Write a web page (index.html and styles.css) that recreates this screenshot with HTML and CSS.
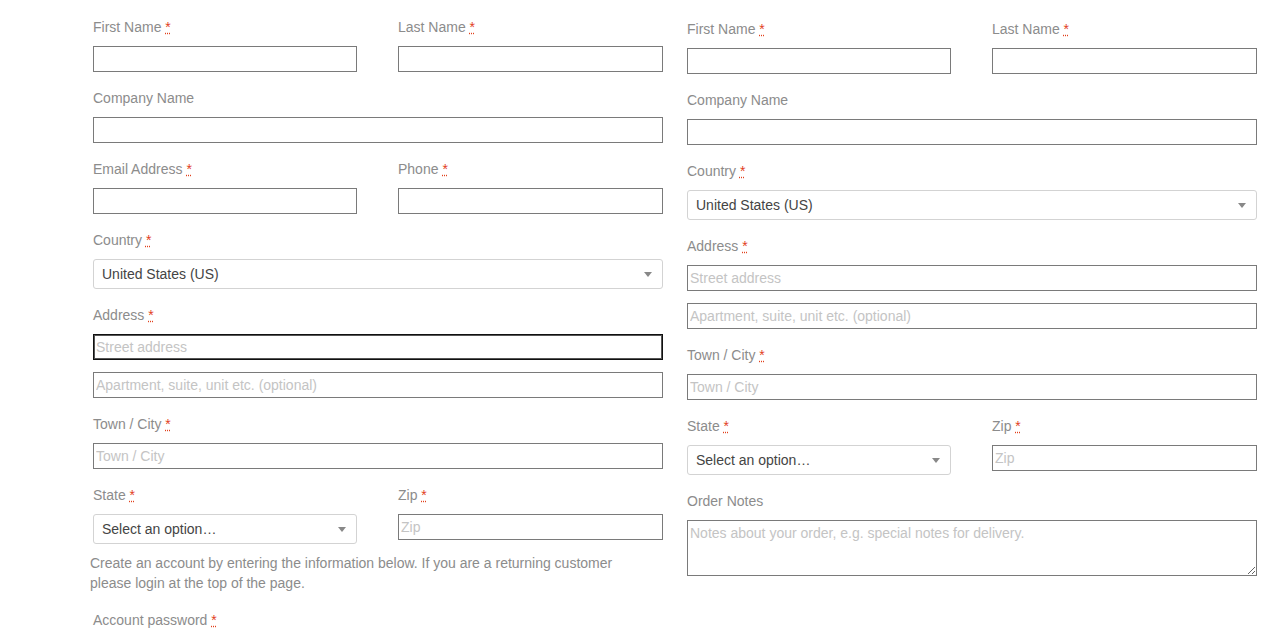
FILE: index.html
```html
<!DOCTYPE html>
<html lang="en">
  <head>
    <meta charset="UTF-8" />
    <meta name="viewport" content="width=device-width, initial-scale=1.0" />
    <title>Checkout</title>
    <link rel="stylesheet" href="styles.css">
  </head>
  <body>
    <div class="checkout">

      <div class="col billing">
        <div class="row-2">
          <div class="form-row">
            <label>First Name <abbr class="required" title="required">*</abbr></label>
            <input type="text" class="input-text" />
          </div>
          <div class="form-row">
            <label>Last Name <abbr class="required" title="required">*</abbr></label>
            <input type="text" class="input-text" />
          </div>
        </div>
        <div class="form-row">
          <label>Company Name</label>
          <input type="text" class="input-text" />
        </div>
        <div class="row-2">
          <div class="form-row">
            <label>Email Address <abbr class="required" title="required">*</abbr></label>
            <input type="email" class="input-text" />
          </div>
          <div class="form-row">
            <label>Phone <abbr class="required" title="required">*</abbr></label>
            <input type="text" class="input-text" />
          </div>
        </div>
        <div class="form-row">
          <label>Country <abbr class="required" title="required">*</abbr></label>
          <div class="select-box"><span class="value">United States (US)</span><span class="arrow"></span></div>
        </div>
        <div class="form-row">
          <label>Address <abbr class="required" title="required">*</abbr></label>
          <input type="text" class="input-text focused" placeholder="Street address" />
          <input type="text" class="input-text second" placeholder="Apartment, suite, unit etc. (optional)" />
        </div>
        <div class="form-row">
          <label>Town / City <abbr class="required" title="required">*</abbr></label>
          <input type="text" class="input-text" placeholder="Town / City" />
        </div>
        <div class="row-2">
          <div class="form-row">
            <label>State <abbr class="required" title="required">*</abbr></label>
            <div class="select-box"><span class="value">Select an option&hellip;</span><span class="arrow"></span></div>
          </div>
          <div class="form-row">
            <label>Zip <abbr class="required" title="required">*</abbr></label>
            <input type="text" class="input-text" placeholder="Zip" />
          </div>
        </div>
        <p class="create-account">Create an account by entering the information below. If you are a returning customer please login at the top of the page.</p>
        <div class="form-row">
          <label>Account password <abbr class="required" title="required">*</abbr></label>
        </div>
      </div>

      <div class="col shipping">
        <div class="row-2">
          <div class="form-row">
            <label>First Name <abbr class="required" title="required">*</abbr></label>
            <input type="text" class="input-text" />
          </div>
          <div class="form-row">
            <label>Last Name <abbr class="required" title="required">*</abbr></label>
            <input type="text" class="input-text" />
          </div>
        </div>
        <div class="form-row">
          <label>Company Name</label>
          <input type="text" class="input-text" />
        </div>
        <div class="form-row">
          <label>Country <abbr class="required" title="required">*</abbr></label>
          <div class="select-box"><span class="value">United States (US)</span><span class="arrow"></span></div>
        </div>
        <div class="form-row">
          <label>Address <abbr class="required" title="required">*</abbr></label>
          <input type="text" class="input-text" placeholder="Street address" />
          <input type="text" class="input-text second" placeholder="Apartment, suite, unit etc. (optional)" />
        </div>
        <div class="form-row">
          <label>Town / City <abbr class="required" title="required">*</abbr></label>
          <input type="text" class="input-text" placeholder="Town / City" />
        </div>
        <div class="row-2">
          <div class="form-row">
            <label>State <abbr class="required" title="required">*</abbr></label>
            <div class="select-box"><span class="value">Select an option&hellip;</span><span class="arrow"></span></div>
          </div>
          <div class="form-row">
            <label>Zip <abbr class="required" title="required">*</abbr></label>
            <input type="text" class="input-text" placeholder="Zip" />
          </div>
        </div>
        <div class="form-row">
          <label>Order Notes</label>
          <textarea class="input-text notes" placeholder="Notes about your order, e.g. special notes for delivery."></textarea>
        </div>
      </div>

    </div>
  </body>
</html>
```

FILE: styles.css
```css
body {
  margin: 0;
  font-family: "Liberation Sans", Arial, sans-serif;
  font-size: 14px;
  color: #8c8c8c;
  background: #fff;
}

.checkout {
  display: grid;
  grid-template-columns: 570px 570px;
  column-gap: 24px;
  padding: 17px 0 0 93px;
}

.shipping {
  padding-top: 2px;
}

.row-2 {
  display: grid;
  grid-template-columns: 264px 265px;
  column-gap: 41px;
}

.form-row {
  display: flex;
  flex-direction: column;
  margin-bottom: 16px;
}

.form-row label {
  display: block;
  line-height: 20px;
  margin-bottom: 9px;
  color: #8c8c8c;
}

.required {
  color: #e2401c;
  text-decoration: underline dotted;
}

.input-text {
  box-sizing: border-box;
  width: 100%;
  height: 26px;
  margin: 0;
  padding: 2px 2px;
  border: 1px solid #7a7a7a;
  font-family: "Liberation Sans", Arial, sans-serif;
  font-size: 14px;
  color: #444;
  background: #fff;
  outline: none;
}

.input-text::placeholder {
  color: #c4c4c4;
}

.input-text.focused {
  border-color: #111;
  box-shadow: inset 0 0 0 1px #555;
}

.input-text.second {
  margin-top: 12px;
}

.notes {
  height: 56px;
  padding: 4px 2px;
  resize: vertical;
}

.select-box {
  box-sizing: border-box;
  height: 30px;
  display: flex;
  align-items: center;
  justify-content: space-between;
  padding: 0 10px 0 8px;
  border: 1px solid #d3d3d3;
  border-radius: 3px;
  color: #444;
  background: #fff;
}

.select-box .value {
  line-height: 28px;
}

.select-box .arrow {
  width: 0;
  height: 0;
  border-left: 4px solid transparent;
  border-right: 4px solid transparent;
  border-top: 5px solid #888;
}

.create-account {
  max-width: 545px;
  margin: -7px 0 17px -3px;
  line-height: 20px;
  color: #8c8c8c;
}
```
